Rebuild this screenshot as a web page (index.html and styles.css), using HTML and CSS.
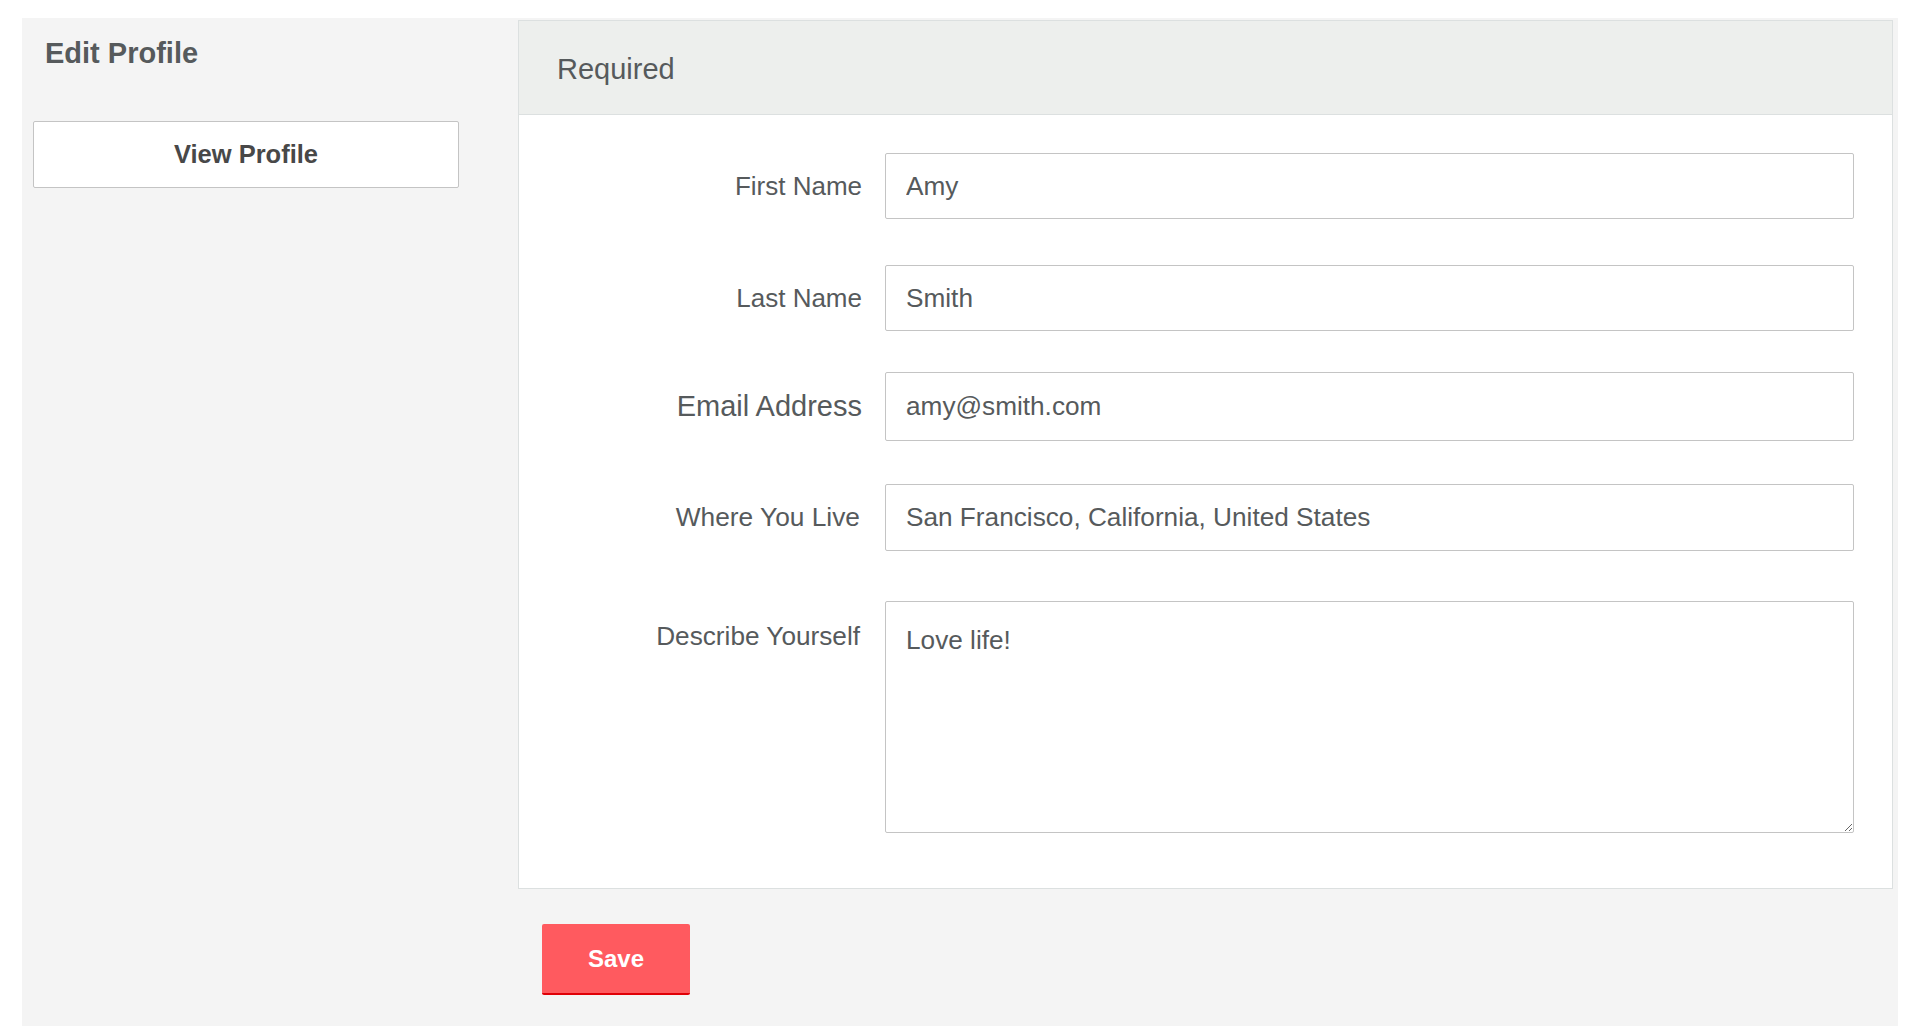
FILE: index.html
```html
<!DOCTYPE html>
<html lang="en">
<head>
<meta charset="utf-8">
<title>Edit Profile</title>
<link rel="stylesheet" href="styles.css">
</head>
<body>
<div class="page">
  <aside class="sidebar">
    <h1 class="sidebar-title">Edit Profile</h1>
    <a class="btn-outline" href="#">View Profile</a>
  </aside>
  <main class="main">
    <section class="panel">
      <header class="panel-head">Required</header>
      <form class="panel-body">
        <label class="field-label" for="fn">First Name</label>
        <input class="field-input" id="fn" type="text" value="Amy">
        <label class="field-label" for="ln">Last Name</label>
        <input class="field-input" id="ln" type="text" value="Smith">
        <label class="field-label field-label-lg" for="em">Email Address</label>
        <input class="field-input field-input-email" id="em" type="text" value="amy@smith.com">
        <label class="field-label field-label-loc" for="loc">Where You Live</label>
        <input class="field-input field-input-loc" id="loc" type="text" value="San Francisco, California, United States">
        <label class="field-label field-label-top" for="desc">Describe Yourself</label>
        <textarea class="field-area" id="desc">Love life!</textarea>
      </form>
    </section>
    <button class="btn-save" type="button">Save</button>
  </main>
</div>
</body>
</html>
```
FILE: styles.css
```css
* { box-sizing: border-box; }
html, body { margin: 0; padding: 0; background: #ffffff; }
body {
  font-family: "Liberation Sans", Arial, sans-serif;
  color: #565a5c;
}
.page {
  margin: 18px 22px 0 22px;
  background: #f4f4f4;
  min-height: 1008px;
  display: flex;
  align-items: flex-start;
}
.sidebar {
  width: 496px;
  flex: none;
  padding-left: 11px;
}
.sidebar-title {
  margin: 18px 0 0 12px;
  font-size: 29px;
  line-height: 34px;
  font-weight: 700;
  color: #565a5c;
}
.btn-outline {
  display: flex;
  align-items: center;
  justify-content: center;
  margin-top: 51px;
  width: 426px;
  height: 67px;
  background: #ffffff;
  border: 1px solid #c4c4c4;
  border-radius: 2px;
  font-size: 25.5px;
  font-weight: 700;
  color: #484848;
  text-decoration: none;
}
.main {
  flex: 1;
  padding: 2px 5px 0 0;
}
.panel {
  background: #ffffff;
  border: 1px solid #dce0e0;
}
.panel-head {
  height: 94px;
  display: flex;
  align-items: center;
  padding: 4px 0 0 38px;
  background: #edefed;
  border-bottom: 1px solid #dce0e0;
  font-size: 29px;
  color: #565a5c;
}
.panel-body {
  display: grid;
  grid-template-columns: 320px 1fr;
  column-gap: 23px;
  row-gap: 46px;
  padding: 38px 38px 55px 23px;
  margin: 0;
}
.field-label {
  align-self: center;
  text-align: right;
  font-size: 26px;
  color: #565a5c;
}
.field-label-lg {
  font-size: 29px;
  margin-top: -5px;
}
.field-label-loc {
  margin-top: -3px;
  margin-right: 2px;
  font-size: 26.3px;
}
.field-label-top {
  align-self: start;
  margin-top: 21px;
  line-height: 36px;
  margin-right: 2px;
  font-size: 26.2px;
}
.field-input,
.field-area {
  display: block;
  width: 100%;
  margin: 0;
  background: #ffffff;
  border: 1px solid #c4c4c4;
  border-radius: 2px;
  font-family: "Liberation Sans", Arial, sans-serif;
  font-size: 26.2px;
  color: #565a5c;
  outline: none;
}
.field-input {
  height: 66px;
  padding: 0 20px;
}
.field-input-email {
  height: 69px;
  margin-top: -5px;
}
.field-input-loc {
  height: 67px;
  margin-top: -3px;
}
.field-area {
  height: 232px;
  margin-top: 4px;
  padding: 20px 20px;
  line-height: 36px;
  resize: vertical;
}
.btn-save {
  display: block;
  margin: 35px 0 0 24px;
  width: 148px;
  height: 71px;
  padding: 0;
  background: #ff5a5f;
  border: none;
  border-bottom: 2px solid #e00007;
  border-radius: 2px;
  color: #ffffff;
  font-family: "Liberation Sans", Arial, sans-serif;
  font-size: 24px;
  font-weight: 700;
}
```
